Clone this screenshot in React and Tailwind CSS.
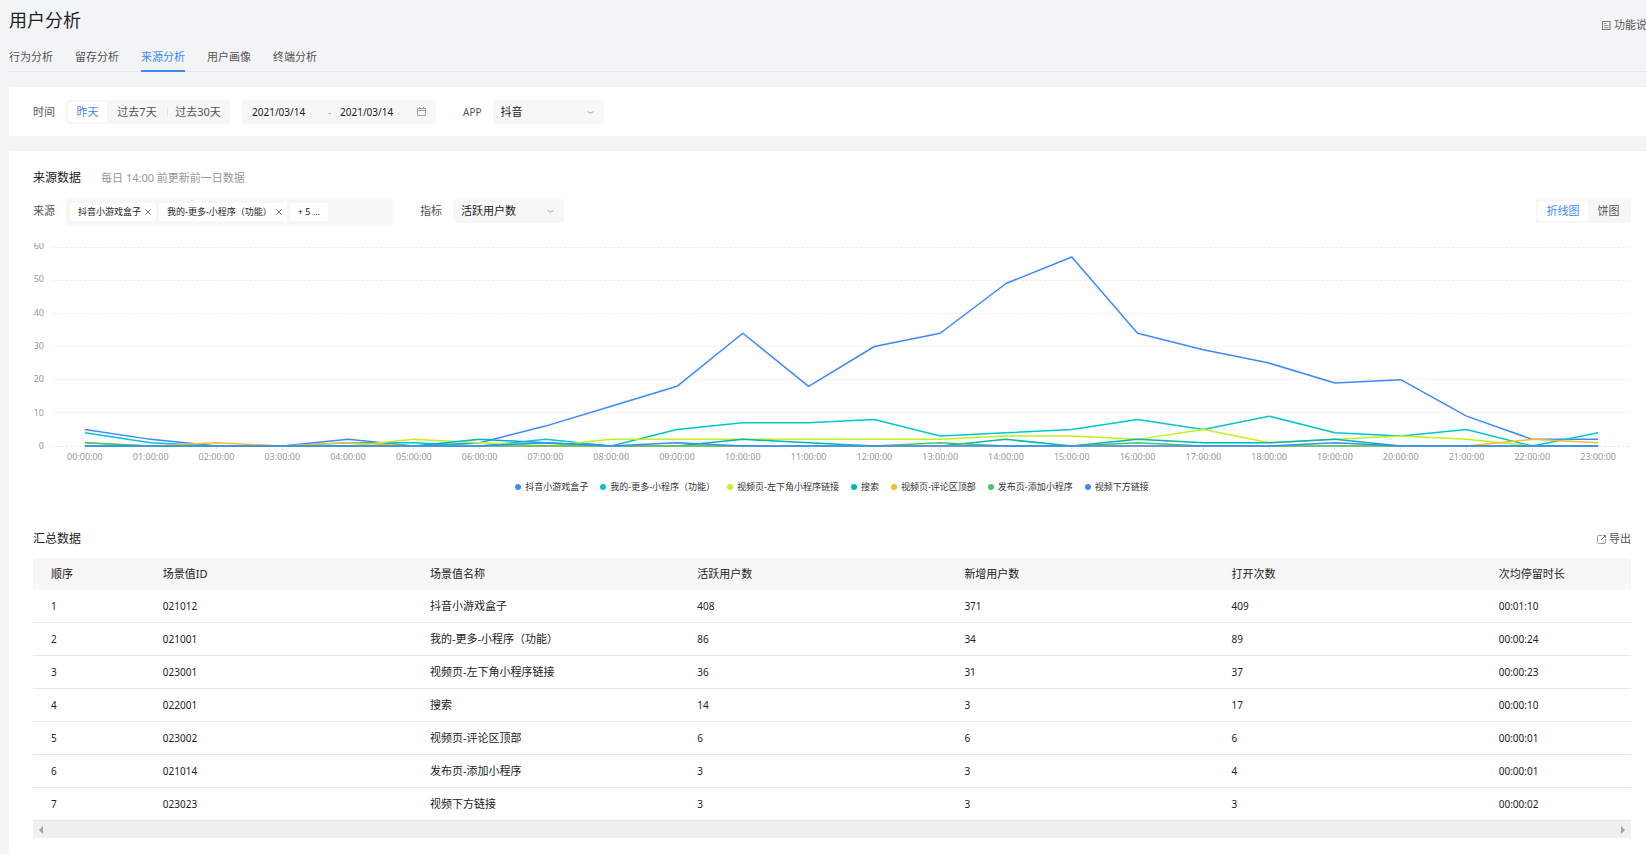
import React from 'react';

const tabs = ['行为分析', '留存分析', '来源分析', '用户画像', '终端分析'];

const hours = Array.from({ length: 24 }, (_, i) => `${String(i).padStart(2, '0')}:00:00`);

const series = [
  { name: '抖音小游戏盒子', color: '#3d89ff', data: [5, 2, 0, 0, 2, 0, 1, 6, 12, 18, 34, 18, 30, 34, 49, 57, 34, 29, 25, 19, 20, 9, 2, 2] },
  { name: '我的-更多-小程序（功能）', color: '#00c6d2', data: [4, 1, 0, 0, 1, 1, 0, 2, 0, 5, 7, 7, 8, 3, 4, 5, 8, 5, 9, 4, 3, 5, 0, 4] },
  { name: '视频页-左下角小程序链接', color: '#c3ee1f', data: [0, 0, 0, 0, 0, 2, 1, 0, 2, 2, 2, 2, 2, 2, 3, 3, 2, 5, 1, 2, 3, 2, 0, 0] },
  { name: '搜索', color: '#00b5b8', data: [0, 0, 0, 0, 0, 0, 2, 1, 0, 0, 2, 1, 0, 0, 2, 0, 2, 1, 1, 2, 0, 0, 0, 0] },
  { name: '视频页-评论区顶部', color: '#ffb829', data: [1, 0, 1, 0, 1, 0, 0, 0, 0, 0, 0, 0, 0, 0, 0, 0, 0, 0, 0, 0, 0, 0, 2, 1] },
  { name: '发布页-添加小程序', color: '#42c66a', data: [1, 0, 0, 0, 0, 0, 0, 0, 0, 0, 0, 0, 0, 1, 0, 0, 1, 0, 0, 0, 0, 0, 0, 0] },
  { name: '视频下方链接', color: '#3d89ff', data: [0, 0, 0, 0, 0, 0, 0, 1, 0, 1, 0, 0, 0, 0, 0, 0, 0, 0, 0, 1, 0, 0, 0, 0] },
];

const columns = ['顺序', '场景值ID', '场景值名称', '活跃用户数', '新增用户数', '打开次数', '次均停留时长'];

const rows = [
  ['1', '021012', '抖音小游戏盒子', '408', '371', '409', '00:01:10'],
  ['2', '021001', '我的-更多-小程序（功能）', '86', '34', '89', '00:00:24'],
  ['3', '023001', '视频页-左下角小程序链接', '36', '31', '37', '00:00:23'],
  ['4', '022001', '搜索', '14', '3', '17', '00:00:10'],
  ['5', '023002', '视频页-评论区顶部', '6', '6', '6', '00:00:01'],
  ['6', '021014', '发布页-添加小程序', '3', '3', '4', '00:00:01'],
  ['7', '023023', '视频下方链接', '3', '3', '3', '00:00:02'],
];

const DocIcon = () => (
  <svg className="w-[9px] h-[9px] flex-shrink-0" viewBox="0 0 9 9" fill="none" stroke="#777" aria-hidden="true">
    <rect x="0.5" y="0.5" width="7.5" height="8" />
    <path d="M2 2.5h2.5M2 4.5h4.5M2 6.5h4.5" strokeWidth="0.8" />
  </svg>
);

const ExportIcon = () => (
  <svg className="w-[9px] h-[9px] flex-shrink-0" viewBox="0 0 9 9" fill="none" stroke="#888" aria-hidden="true">
    <path d="M5 0.5H1.5a1 1 0 0 0-1 1v6a1 1 0 0 0 1 1h6a1 1 0 0 0 1-1V4" strokeWidth="0.8" />
    <path d="M6.2 0.6h2.2v2.2M8.2 0.8L4 5" stroke="#555" strokeWidth="0.9" />
  </svg>
);

const CalendarIcon = () => (
  <svg className="w-[9px] h-[9px] flex-shrink-0" viewBox="0 0 9 9" fill="none" stroke="#a0a0a0" aria-hidden="true">
    <path d="M0.5 1.5h8v7h-8zM0.5 3.5h8" />
    <path d="M2.5 0v2M6.5 0v2" />
  </svg>
);

const ArrowIcon = () => (
  <svg className="absolute right-[10px] top-[11px] w-[7px] h-[3px] pointer-events-none" viewBox="0 0 7 3" fill="none" stroke="#a0a0a0" aria-hidden="true">
    <path d="M0.5 0.5L3.5 2.2L6.5 0.5" strokeWidth="0.9" />
  </svg>
);

const CloseIcon = () => (
  <svg className="w-[6px] h-[6px]" viewBox="0 0 6 6" fill="none" stroke="#555" aria-hidden="true">
    <path d="M0.3 0.3l5.4 5.4M5.7 0.3L0.3 5.7" strokeWidth="0.8" />
  </svg>
);

const Select = ({ id, value }) => (
  <div className="relative w-[111px] h-6">
    <select id={id} defaultValue={value} className="appearance-none w-full h-full rounded-[3px] bg-[#f7f7f7] pl-2 text-[11px] text-[#222]">
      <option>{value}</option>
    </select>
    <ArrowIcon />
  </div>
);

const Tag = ({ children, closable }) => (
  <span className="flex items-center h-[18px] rounded-[2px] bg-white px-2 text-[9px] text-[#222] whitespace-nowrap">
    {children}
    {closable && (
      <button type="button" aria-label="移除" className="ml-1 -mr-[3px]">
        <CloseIcon />
      </button>
    )}
  </span>
);

// Plot area is stretched to the container, strokes keep their width
const LineChart = () => {
  const y = (v) => 203 - (v / 60) * 199;
  return (
    <div className="flex overflow-hidden text-[9px] text-[#999]">
      <div className="w-[19px] h-[206px] flex-shrink-0 flex flex-col justify-between">
        {[60, 50, 40, 30, 20, 10, 0].map((v) => (
          <span key={v} className="h-[6px] flex items-center justify-end w-[11px]">{v}</span>
        ))}
      </div>
      <div className="flex-1 min-w-0">
        <svg className="block w-full h-[208px]" viewBox="0 0 1584 208" preserveAspectRatio="none" fill="none">
          {[10, 20, 30, 40, 50, 60].map((v) => (
            <line key={v} x1="0" x2="1584" y1={Math.floor(y(v)) + 0.5} y2={Math.floor(y(v)) + 0.5} stroke="#f0f0f0" strokeDasharray="3 1.5" />
          ))}
          <line x1="0" x2="1584" y1="203.5" y2="203.5" stroke="#ececec" strokeDasharray="3 1.5" />
          {hours.map((h, i) => (
            <line key={h} x1={33 + i * 66} x2={33 + i * 66} y1="204" y2="207" stroke="#e5e5e5" />
          ))}
          {series.map((s) => (
            <polyline
              key={s.name}
              points={s.data.map((v, i) => `${33 + i * 66},${y(v)}`).join(' ')}
              stroke={s.color}
              strokeWidth="1.5"
              strokeLinejoin="bevel"
              vectorEffect="non-scaling-stroke"
            />
          ))}
        </svg>
        <div className="grid grid-cols-[repeat(24,minmax(0,1fr))] text-center leading-3">
          {hours.map((h) => (
            <span key={h}>{h}</span>
          ))}
        </div>
      </div>
    </div>
  );
};

const App = () => {
  return (
    <div className="min-h-screen overflow-hidden flex flex-col bg-[#f3f4f6] pl-[9px] text-[11px] leading-4 text-[#222] font-['Noto_Sans','Noto_Sans_CJK_SC',sans-serif]">
      {/* Page header */}
      <header className="flex justify-between whitespace-nowrap">
        <h1 className="mt-2 text-[18px] leading-6">用户分析</h1>
        <a href="#help" className="mt-[17px] -mr-3 flex items-center gap-[3px] text-[#555]">
          <DocIcon />
          功能说明
        </a>
      </header>

      <nav className="mt-4 flex gap-[22px] border-b border-[#e6e7e9]">
        {tabs.map((t) => (
          <a
            key={t}
            href="#tab"
            className={
              t === '来源分析'
                ? 'h-[23px] -mb-px border-b-2 border-[#3d89ff] text-[#3d89ff]'
                : 'h-[23px] -mb-px text-[#555]'
            }
          >
            {t}
          </a>
        ))}
      </nav>

      {/* Filters */}
      <section className="mt-[15px] h-[49px] bg-white px-6 flex items-center">
        <span className="text-[#555]">时间</span>
        <div className="ml-[11px] h-6 w-[164px] rounded-[3px] bg-[#f7f7f7] p-[2px] flex items-center justify-between text-[#555]">
          <button type="button" className="h-5 w-[39px] rounded-[3px] bg-white text-[#3d89ff]">昨天</button>
          <button type="button" className="h-5 flex-1">过去7天</button>
          <span className="w-px h-[10px] bg-[#e5e5e5]" />
          <button type="button" className="h-5 flex-1">过去30天</button>
        </div>
        <div className="ml-3 h-6 w-[194px] rounded-[3px] bg-[#f7f7f7] px-[10px] flex items-center text-[10px]">
          <input aria-label="开始日期" defaultValue="2021/03/14" className="w-[76px] bg-transparent" />
          <span className="w-3 text-[#aaa]">-</span>
          <input aria-label="结束日期" defaultValue="2021/03/14" className="w-[77px] bg-transparent" />
          <CalendarIcon />
        </div>
        <label htmlFor="app" className="ml-[27px] mr-[11px] text-[10px] text-[#555]">APP</label>
        <Select id="app" value="抖音" />
      </section>

      {/* Source data */}
      <main className="mt-[15px] flex-1 bg-white pl-6 pr-[15px] pt-[19px]">
        <div className="flex items-center gap-5">
          <h2 className="text-[12px]">来源数据</h2>
          <span className="text-[#999]">每日 14:00 前更新前一日数据</span>
        </div>
        <div className="mt-[13px] flex items-start">
          <span className="mt-1 text-[#555]">来源</span>
          <div className="ml-[11px] h-[26px] w-[327px] rounded-[3px] bg-[#f7f7f7] px-1 flex items-center gap-[3px]">
            <Tag closable>抖音小游戏盒子</Tag>
            <Tag closable>我的-更多-小程序（功能）</Tag>
            <Tag>+ 5 ...</Tag>
          </div>
          <label htmlFor="metric" className="mt-1 ml-[27px] mr-[11px] text-[#555]">指标</label>
          <Select id="metric" value="活跃用户数" />
          <div className="ml-auto h-6 w-[95px] rounded-[3px] bg-[#f7f7f7] p-[2px] flex text-[#555]">
            <button type="button" className="h-5 w-[50px] rounded-[3px] bg-white text-[#3d89ff]">折线图</button>
            <button type="button" className="h-5 flex-1">饼图</button>
          </div>
        </div>

        <div className="mt-[18px]">
          <LineChart />
        </div>
        <ul className="mt-4 flex justify-center gap-3 text-[9px] text-[#333]">
          {series.map((s) => (
            <li key={s.name} className="flex items-center gap-1">
              <span className="w-[6px] h-[6px] rounded-full" style={{ backgroundColor: s.color }} />
              {s.name}
            </li>
          ))}
        </ul>

        {/* Summary table */}
        <div className="mt-9 flex items-center justify-between">
          <h2 className="text-[12px]">汇总数据</h2>
          <button type="button" className="flex items-center gap-[3px] text-[#555]">
            <ExportIcon />
            导出
          </button>
        </div>
        <table className="mt-[11px] w-full table-fixed border-separate border-spacing-0 text-left">
          <thead>
            <tr className="h-8">
              {columns.map((c, i) => (
                <th
                  key={c}
                  className={
                    i === 0
                      ? 'w-[7%] pl-[18px] bg-[#f7f7f7] font-normal rounded-l-[3px]'
                      : i === 6
                        ? 'pl-[18px] bg-[#f7f7f7] font-normal rounded-r-[3px]'
                        : 'w-[16.72%] pl-[18px] bg-[#f7f7f7] font-normal'
                  }
                >
                  {c}
                </th>
              ))}
            </tr>
          </thead>
          <tbody>
            {rows.map((r) => (
              <tr key={r[0]} className="h-[33px]">
                {r.map((cell, i) => (
                  <td key={i} className={i === 2 ? 'pl-[18px] border-b border-[#e8e8e8] text-[11px]' : 'pl-[18px] border-b border-[#e8e8e8] text-[10px]'}>
                    {cell}
                  </td>
                ))}
              </tr>
            ))}
          </tbody>
        </table>
        <div className="h-[17px] mb-4 bg-[#f0f0f0] flex items-center justify-between px-[6px]">
          <span className="border-y-4 border-r-4 border-y-transparent border-r-[#a3a3a3]" />
          <span className="border-y-4 border-l-4 border-y-transparent border-l-[#a3a3a3]" />
        </div>
      </main>
    </div>
  );
};

export default App;
